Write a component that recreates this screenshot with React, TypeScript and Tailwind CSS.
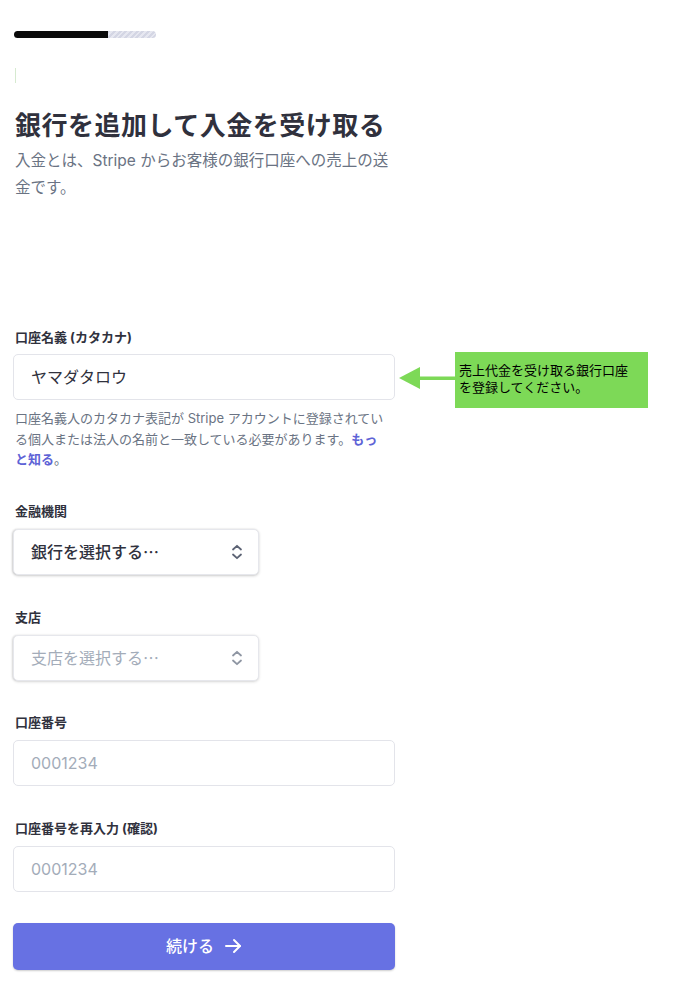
import React from "react";

const font = { fontFamily: '"Inter", "Noto Sans CJK JP", sans-serif' };
const cjk = { fontFamily: '"Noto Sans CJK JP", sans-serif' };

function Chevrons({ color }: { color: string }) {
  return (
    <svg width="14" height="16" viewBox="0 0 14 16" fill="none" stroke={color} strokeWidth="1.8" strokeLinecap="round" strokeLinejoin="round">
      <path d="M3 5.5 L7 1.8 L11 5.5" />
      <path d="M3 10.5 L7 14.2 L11 10.5" />
    </svg>
  );
}

function Label({ children }: { children: React.ReactNode }) {
  return <div className="text-[13px] leading-[18px] font-bold text-[#30313d]">{children}</div>;
}

export default function App() {
  return (
    <div className="relative min-h-[1007px] w-[675px] bg-white" style={font}>
      <div className="pl-[14px] pt-[31px]">
        <div className="flex h-[7px] w-[142px] overflow-hidden rounded-full">
          <div className="h-full w-[94px] bg-[#0a0a0a]" />
          <div className="h-full flex-1 bg-[repeating-linear-gradient(135deg,#d4d6e4_0px,#d4d6e4_2px,#e6e7f0_2px,#e6e7f0_4px)]" />
        </div>
        <div className="ml-[1px] mt-[30px] h-[15px] w-[1px] bg-[#d6ead0]" />
      </div>

      <div className="pl-[15px]">
        <h1 className="mt-[26px] text-[26px] leading-[34px] font-bold tracking-[0.5px] text-[#30313d] whitespace-nowrap">
          銀行を追加して入金を受け取る
        </h1>
        <div className="mt-[4px] text-[15.5px] leading-[27px] text-[#6a7383] whitespace-nowrap">
          <div>入金とは、Stripe からお客様の銀行口座への売上の送</div>
          <div>金です。</div>
        </div>
      </div>

      <div className="mt-[127px] w-[382px] ml-[13px]">
        <div className="pl-[2px]">
          <Label>口座名義 (カタカナ)</Label>
        </div>
        <div className="mt-[8px] flex h-[46px] items-center rounded-[5px] border border-[#e3e4ea] px-[17px] text-[16px] text-[#30313d]">
          ヤマダタロウ
        </div>
        <div className="mt-[8px] pl-[2px] text-[13px] leading-[20.5px] text-[#6a7383] whitespace-nowrap">
          <div>口座名義人のカタカナ表記が Stripe アカウントに登録されてい</div>
          <div>
            る個人または法人の名前と一致している必要があります。<span className="font-bold text-[#5e63d6]">もっ</span>
          </div>
          <div>
            <span className="font-bold text-[#5e63d6]">と知る</span>。
          </div>
        </div>

        <div className="mt-[32px] pl-[2px]">
          <Label>金融機関</Label>
        </div>
        <div className="mt-[9px] flex h-[46px] w-[246px] items-center justify-between rounded-[5px] border border-[#e6e7ec] bg-white pl-[17px] pr-[14px] text-[16px] font-medium text-[#30313d] shadow-[0_1px_3px_rgba(0,0,0,0.18),-1px_0_2px_rgba(0,0,0,0.12)]">
          <span>
            銀行を選択する<span style={cjk}>…</span>
          </span>
          <Chevrons color="#5c6374" />
        </div>

        <div className="mt-[33px] pl-[2px]">
          <Label>支店</Label>
        </div>
        <div className="mt-[9px] flex h-[46px] w-[246px] items-center justify-between rounded-[5px] border border-[#e6e7ec] bg-white pl-[17px] pr-[14px] text-[16px] text-[#a3acb9] shadow-[0_1px_3px_rgba(0,0,0,0.14),-1px_0_2px_rgba(0,0,0,0.1)]">
          <span>
            支店を選択する<span style={cjk}>…</span>
          </span>
          <Chevrons color="#8f96a3" />
        </div>

        <div className="mt-[32px] pl-[2px]">
          <Label>口座番号</Label>
        </div>
        <div className="mt-[9px] flex h-[46px] items-center rounded-[5px] border border-[#e3e4ea] px-[17px] text-[16px] text-[#a3acb9]">
          0001234
        </div>

        <div className="mt-[33px] pl-[2px]">
          <Label>口座番号を再入力 (確認)</Label>
        </div>
        <div className="mt-[9px] flex h-[46px] items-center rounded-[5px] border border-[#e3e4ea] px-[17px] text-[16px] text-[#a3acb9]">
          0001234
        </div>

        <button className="mt-[31px] flex h-[47px] w-full items-center justify-center gap-[10px] rounded-[5px] bg-[#6771e3] text-[16px] font-medium text-white shadow-[0_1px_2px_rgba(0,0,0,0.2)]">
          <span>続ける</span>
          <svg width="18" height="16" viewBox="0 0 18 16" fill="none" stroke="white" strokeWidth="2" strokeLinecap="round" strokeLinejoin="round">
            <path d="M2 8 H16" />
            <path d="M10 2 L16 8 L10 14" />
          </svg>
        </button>
      </div>

      {/* annotation callout */}
      <div className="absolute left-[399px] top-[367px] flex h-[22px] items-center">
        <svg width="56" height="22" viewBox="0 0 56 22">
          <polygon points="0,11 21,0 21,22" fill="#7dd957" />
          <rect x="20" y="9.5" width="36" height="3.5" fill="#7dd957" />
        </svg>
      </div>
      <div className="absolute left-[455px] top-[352px] h-[56px] w-[193px] bg-[#7dd957] pl-[4px] pt-[9px] text-[13px] leading-[17px] text-black" style={cjk}>
        売上代金を受け取る銀行口座
        <br />
        を登録してください。
      </div>
    </div>
  );
}
